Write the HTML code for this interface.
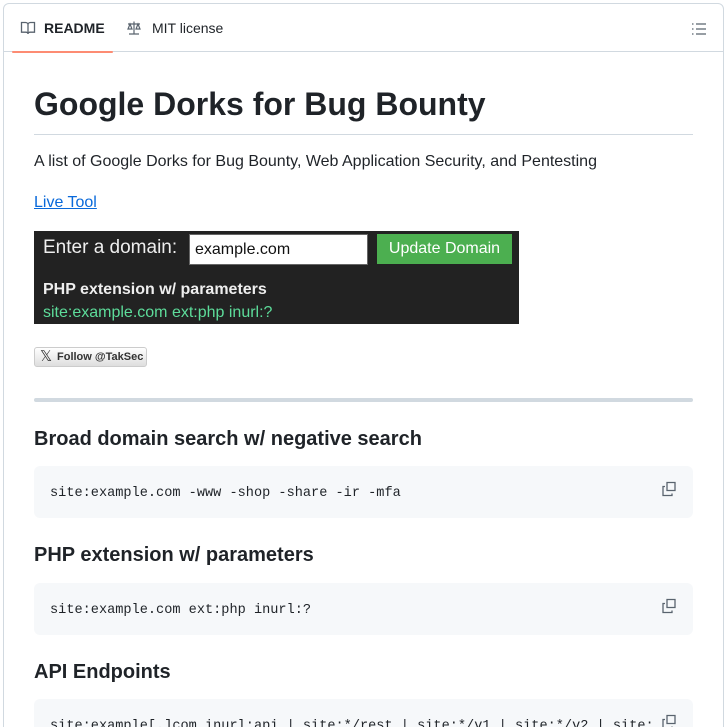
<!DOCTYPE html>
<html><head><meta charset="utf-8"><style>
*{box-sizing:border-box;margin:0;padding:0}
html,body{width:727px;height:727px;overflow:hidden}
body{background:#fff;font-family:"Liberation Sans",sans-serif;color:#1f2328;position:relative}
.card{position:absolute;left:3px;top:3px;width:721px;height:740px;border:1px solid #d1d9e0;border-radius:6px}
.tabs{height:48px;border-bottom:1px solid #d1d9e0;position:relative}
.tab{position:absolute;top:0;height:48px;display:flex;align-items:center;font-size:14px}
.t1{left:8px;padding:0 8px;font-weight:bold}
.t1:after{content:"";position:absolute;left:0;right:0;bottom:-1px;height:2px;background:#fd8c73;border-radius:2px}
.t2{left:122px}
svg{display:block}
.c{position:absolute;left:34px;width:659px}
h1{position:absolute;left:34px;top:86px;width:659px;font-size:32px;font-weight:bold;padding-bottom:12px;border-bottom:1px solid #d1d9e0;line-height:36px}
h2{position:absolute;left:34px;font-size:20px;font-weight:bold}
.code{position:absolute;left:34px;width:659px;height:52px;background:#f6f8fa;border-radius:6px;font-family:"Liberation Mono",monospace;font-size:13.6px;padding:2px 16px 0;line-height:52px;white-space:nowrap;overflow:hidden}
.cp{position:absolute;right:16px;top:15px}
</style></head><body>
<div class="card">
<div class="tabs">
<div class="tab t1"><svg width="16" height="16" viewBox="0 0 16 16" fill="none" stroke="#59636e" stroke-width="1.3"><path d="M1.5 2.5h4c1.4 0 2.5 1 2.5 2.3V14c0-1-1-1.8-2.2-1.8H1.5z M14.5 2.5h-4C9.1 2.5 8 3.5 8 4.8V14c0-1 1-1.8 2.2-1.8h4.3z"/></svg><span style="margin-left:8px">README</span></div>
<div class="tab t2"><svg width="16" height="16" viewBox="0 0 16 16" fill="none" stroke="#59636e" stroke-width="1.2"><path d="M8 1.5v12M3 14h10M2 4h12M4 4l-2 5h4zM12 4l-2 5h4z"/></svg><span style="margin-left:10px;color:#1f2328">MIT license</span></div>
<svg style="position:absolute;right:16px;top:17px" width="16" height="16" viewBox="0 0 16 16" fill="none" stroke="#59636e" stroke-width="1.3"><path d="M5 3h10M5 8h10M5 13h10M1 3h1.5M1 8h1.5M1 13h1.5"/></svg>
</div>
</div>
<h1>Google Dorks for Bug Bounty</h1>
<div class="c" style="top:153px;font-size:16px">A list of Google Dorks for Bug Bounty, Web Application Security, and Pentesting</div>
<div class="c" style="top:194px;font-size:16px;color:#0969da;text-decoration:underline">Live Tool</div>
<div style="position:absolute;left:34px;top:231px;width:485px;height:93px;background:#222">
<div style="position:absolute;left:9px;top:6px;font-size:19px;color:#eee">Enter a domain:</div>
<div style="position:absolute;left:155px;top:3px;width:179px;height:31px;background:#fff;border:1px solid #666;font-size:16px;padding:6px 5px;color:#111">example.com</div>
<div style="position:absolute;left:343px;top:3px;width:135px;height:30px;background:#4caf50;color:#fff;font-size:16px;text-align:center;line-height:30px">Update Domain</div>
<div style="position:absolute;left:9px;top:50px;font-size:16px;font-weight:bold;color:#eee">PHP extension w/ parameters</div>
<div style="position:absolute;left:9px;top:73px;font-size:16px;color:#5ddc9a">site:example.com ext:php inurl:?</div>
</div>
<div style="position:absolute;left:34px;top:347px;width:113px;height:20px;border:1px solid #ccc;border-radius:3px;background:linear-gradient(#fff,#dedede);font-size:11px;font-weight:bold;line-height:18px;padding-left:22px;color:#333">Follow @TakSec<span style="position:absolute;left:5px;top:0;font-weight:normal;font-size:15px">𝕏</span></div>
<div style="position:absolute;left:34px;top:398px;width:659px;height:4px;background:#d1d9e0;border-radius:2px"></div>
<h2 style="top:428px">Broad domain search w/ negative search</h2>
<div class="code" style="top:466px">site:example.com -www -shop -share -ir -mfa<svg class="cp" width="16" height="16" viewBox="0 0 16 16" fill="none" stroke="#59636e" stroke-width="1.3"><path d="M6 1.5h8v8H6z M4 5.5H2v9h9v-2"/></svg></div>
<h2 style="top:544px">PHP extension w/ parameters</h2>
<div class="code" style="top:583px">site:example.com ext:php inurl:?<svg class="cp" width="16" height="16" viewBox="0 0 16 16" fill="none" stroke="#59636e" stroke-width="1.3"><path d="M6 1.5h8v8H6z M4 5.5H2v9h9v-2"/></svg></div>
<h2 style="top:661px">API Endpoints</h2>
<div class="code" style="top:699px"><span style="display:inline-block;width:604px;overflow:hidden;vertical-align:top">site:example[.]com inurl:api | site:*/rest | site:*/v1 | site:*/v2 | site:*/v3</span><svg class="cp" style="background:#f6f8fa" width="16" height="16" viewBox="0 0 16 16" fill="none" stroke="#59636e" stroke-width="1.3"><path d="M6 1.5h8v8H6z M4 5.5H2v9h9v-2"/></svg></div>
</body></html>
